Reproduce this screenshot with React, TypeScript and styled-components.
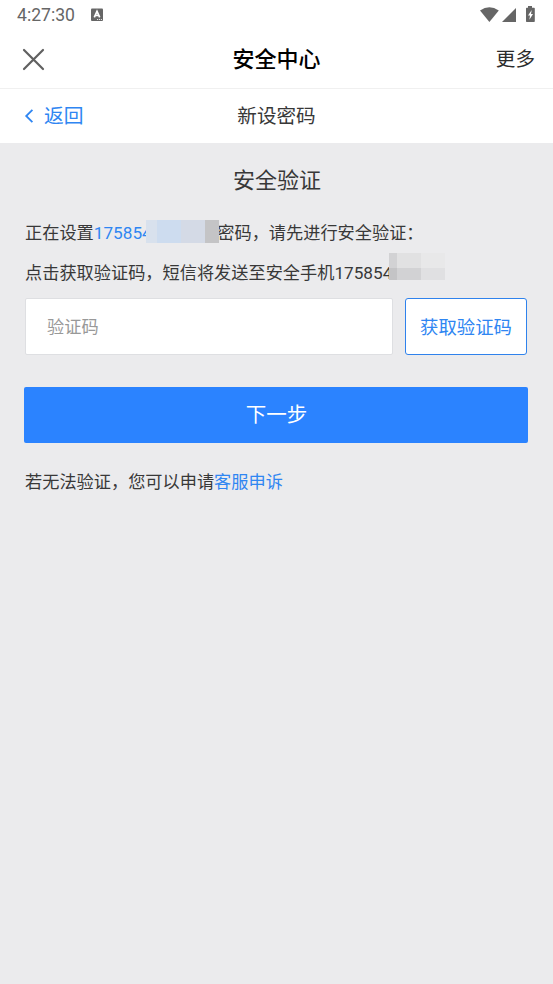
import React from 'react';
import styled, { createGlobalStyle } from 'styled-components';

const BLUE = '#2b83ff';
const LINK = '#2f86f2';

const GlobalStyle = createGlobalStyle`
  * { box-sizing: border-box; }
  body {
    margin: 0;
    background: #ebebed;
    font-family: Roboto, "Noto Sans CJK SC", sans-serif;
    color: #383838;
  }
  button, input { font-family: inherit; }
`;

const Screen = styled.div`
  min-height: 984px;
  display: flex;
  flex-direction: column;
  background: #ebebed;
  overflow: hidden;
`;

const StatusBar = styled.div`
  height: 30px;
  padding: 0 17px;
  display: flex;
  align-items: center;
  background: #fff;
  color: #666;
`;

const Clock = styled.span`
  width: 74px;
  font-size: 17.6px;
  line-height: 30px;
`;

const StatusIcons = styled.div`
  margin-left: auto;
  display: flex;
  height: 30px;
`;

const NavBar = styled.header<{ $height: number }>`
  height: ${(p) => p.$height}px;
  display: grid;
  grid-template-columns: 1fr auto 1fr;
  align-items: center;
  background: #fff;
`;

const TopBar = styled(NavBar)`
  border-bottom: 1px solid #f0f0f0;
  padding: 0 18px 0 22px;
`;

const SubBar = styled(NavBar)`
  padding: 0 24px;
`;

const AppTitle = styled.h1`
  margin: 0 4px 0 0;
  padding-top: 2px;
  font-size: 22px;
  line-height: 32px;
  font-weight: 500;
  color: #000;
`;

const PageTitle = styled.h2`
  margin: 0;
  padding-top: 1px;
  font-size: 19.6px;
  line-height: 28px;
  font-weight: 400;
`;

const IconButton = styled.button`
  justify-self: start;
  display: flex;
  padding: 0;
  border: 0;
  background: none;
`;

const MoreButton = styled.button`
  justify-self: end;
  padding: 2px 0 0;
  border: 0;
  background: none;
  color: #2b2b2b;
  font-size: 19.6px;
  line-height: 28px;
`;

const BackButton = styled.button`
  justify-self: start;
  display: flex;
  align-items: center;
  gap: 10px;
  padding: 1px 0 0;
  border: 0;
  background: none;
  color: ${LINK};
  font-size: 19.8px;
  line-height: 28px;

  svg { margin-bottom: 2px; }
`;

const Content = styled.main`
  padding: 22px 24px 0 25px;
`;

const Heading = styled.h3`
  margin: 0 0 23px;
  text-align: center;
  font-size: 22px;
  line-height: 32px;
  font-weight: 400;
`;

const Line = styled.p<{ $gap: number }>`
  margin: 0 0 ${(p) => p.$gap}px;
  height: 26px;
  font-size: 17.2px;
  line-height: 26px;
  white-space: nowrap;
`;

const Phone = styled.span<{ $width: number; $blue?: boolean }>`
  position: relative;
  display: inline-block;
  width: ${(p) => p.$width}px;
  color: ${(p) => (p.$blue ? LINK : 'inherit')};
`;

const Mosaic = styled.span<{ $left: number; $top: number; $cols: string; $rows: string }>`
  position: absolute;
  left: ${(p) => p.$left}px;
  top: ${(p) => p.$top}px;
  display: grid;
  grid-template-columns: ${(p) => p.$cols};
  grid-template-rows: ${(p) => p.$rows};
`;

const Tile = styled.i<{ $color: string }>`
  background: ${(p) => p.$color};
`;

const CodeRow = styled.div`
  display: flex;
  gap: 12px;
  height: 57px;
  margin-bottom: 32px;
`;

const CodeInput = styled.input`
  width: 368px;
  padding: 0 21px;
  border: 1px solid #dedfe2;
  border-radius: 2px;
  background: #fff;
  font-size: 17.2px;
  outline: none;
  &::placeholder { color: #999; opacity: 1; }
`;

const CodeButton = styled.button`
  width: 122px;
  padding: 0 0 2px;
  border: 1px solid #2f82ec;
  border-radius: 3px;
  background: #fff;
  color: ${LINK};
  font-size: 18.4px;
  white-space: nowrap;
`;

const NextButton = styled.button`
  display: block;
  width: 504px;
  height: 56px;
  margin: 0 0 26px -0.6px;
  padding: 0 0 4px;
  border: 0;
  border-radius: 2px;
  background: ${BLUE};
  color: #fff;
  font-size: 20.5px;
`;

const Link = styled.a`
  color: ${LINK};
`;

export default function App() {
  return (
    <Screen>
      <GlobalStyle />
      <StatusBar>
        <Clock>4:27:30</Clock>
        <svg width="12" height="30" viewBox="0 0 12 30">
          <rect x="0" y="8.500" width="12" height="12.500" rx="1" fill="#666" />
          <path d="M3.300 17.400 6 11.300l2.700 6.100M4.200 15.500h3.600" fill="none" stroke="#fff" strokeWidth="1.700" />
          <path d="M6 19.500h1.200M8 19.500h1.200M10 19.500h1" stroke="#fff" strokeWidth="0.800" />
        </svg>
        <StatusIcons>
          <svg width="56" height="30" viewBox="480 0 56 30">
            <path d="M480 10.600Q489.300 3.800 498.800 10.600L489.400 22Z" fill="#666" />
            <path d="M516 8v14h-14Z" fill="#666" />
            <path d="M528 6h4v1.800h2.100q.700 0 .700.700v12.700q0 .8-.8.8h-7.300q-.7 0-.7-.8V8.500q0-.7.7-.7h1.300Z" fill="#666" />
            <path d="M531.700 10 528 15.500h2l-.6 4.200 3.600-5.700h-2Z" fill="#fff" />
          </svg>
        </StatusIcons>
      </StatusBar>

      <TopBar $height={59}>
        <IconButton aria-label="关闭">
          <svg width="23" height="23" viewBox="0 0 23 23" fill="none" stroke="#606060" strokeWidth="2.200" strokeLinecap="round">
            <path d="m2 2 19 19M21 2 2 21" />
          </svg>
        </IconButton>
        <AppTitle>安全中心</AppTitle>
        <MoreButton>更多</MoreButton>
      </TopBar>

      <SubBar $height={54}>
        <BackButton>
          <svg width="10" height="14" viewBox="0 0 10 14" fill="none" stroke={LINK} strokeWidth="1.800">
            <path d="M8.400 .8 2.200 7l6.200 6.200" />
          </svg>
          返回
        </BackButton>
        <PageTitle>新设密码</PageTitle>
      </SubBar>

      <Content>
        <Heading>安全验证</Heading>
        <Line $gap={14}>
          正在设置
          <Phone $width={123.500} $blue>
            175854
            <Mosaic $left={52.200} $top={0} $cols="11px 24px 24px 14px" $rows="23px">
              <Tile $color="#d8e1ed" />
              <Tile $color="#cddcef" />
              <Tile $color="#d4dae6" />
              <Tile $color="#c4c4c6" />
            </Mosaic>
          </Phone>
          密码，请先进行安全验证：
        </Line>
        <Line $gap={12}>
          点击获取验证码，短信将发送至安全手机
          <Phone $width={112}>
            175854
            <Mosaic $left={54.400} $top={-7} $cols="8px 24px 24px" $rows="15px 12px">
              <Tile $color="#d2d2d4" />
              <Tile $color="#e1e1e2" />
              <Tile $color="#e8e8e9" />
              <Tile $color="#c4c4c6" />
              <Tile $color="#d2d2d4" />
              <Tile $color="#e0e0e2" />
            </Mosaic>
          </Phone>
        </Line>
        <CodeRow>
          <CodeInput placeholder="验证码" />
          <CodeButton>获取验证码</CodeButton>
        </CodeRow>
        <NextButton>下一步</NextButton>
        <Line $gap={0}>
          若无法验证，您可以申请<Link>客服申诉</Link>
        </Line>
      </Content>
    </Screen>
  );
}
